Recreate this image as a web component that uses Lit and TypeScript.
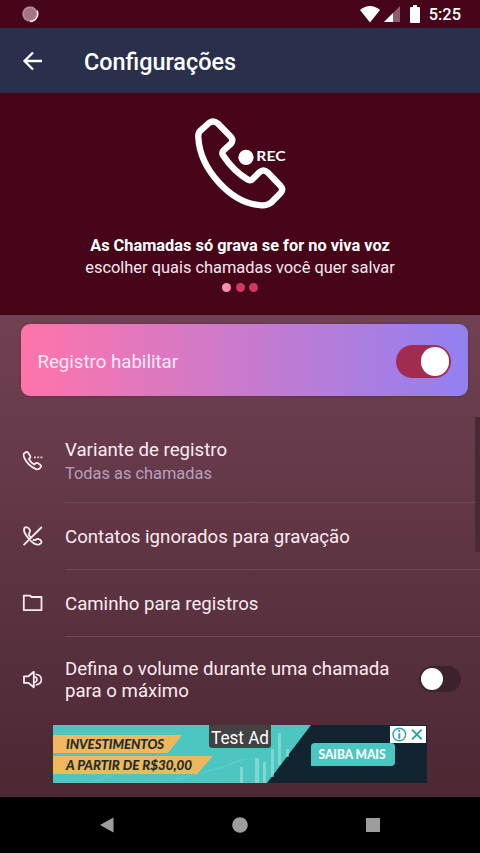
import { LitElement, html, css, svg } from "lit";
import { customElement } from "lit/decorators.js";

const callPath =
  "M59 94Q54 101 55 113C60 205 150 311 245 316Q262 317 273 308L302 279Q311 268 302 258L263 217Q250 206 238 217L218 237Q212 243 204 239C175 222 145 190 128 164Q125 158 130 152L153 131Q161 121 153 111L113 70Q100 59 87 69Z";

@customElement("toggle-switch")
class ToggleSwitch extends LitElement {
  static properties = { on: { type: Boolean, reflect: true } };
  static styles = css`
    :host { display: flex; align-items: center; box-sizing: border-box; width: 42px; height: 26px; border-radius: 13px; padding: 2px; background: #3c222c; }
    :host([on]) { width: 55px; height: 33px; border-radius: 17px; background: #a12c50; justify-content: flex-end; }
    .knob { width: 22px; height: 22px; border-radius: 50%; background: #fff; }
    :host([on]) .knob { width: 28.5px; height: 28.5px; }
  `;
  render() { return html`<div class="knob"></div>`; }
}

@customElement("app-root")
class AppRoot extends LitElement {
  static styles = css`
    :host { display: flex; flex-direction: column; width: 480px; height: 853px; overflow: hidden; background: #000; color: #fff; font-family: Roboto, "Noto Sans", sans-serif; }
    svg { display: block; flex: none; }
    .status { height: 28px; flex: none; background: #47051a; display: flex; align-items: center; box-sizing: border-box; padding: 0 19px 0 21px; }
    .status .time { font-size: 16.4px; font-weight: 500; line-height: 28px; margin-left: 9px; padding-top: 1px; }
    .spacer { flex: 1; }
    .wifi { margin-right: 4px; }
    .signal { margin-right: 10px; }
    .bar { height: 65px; flex: none; background: #2a304b; display: flex; align-items: center; padding-left: 22px; }
    .bar h1 { margin: 2px 0 0 41px; font-size: 23.4px; font-weight: 500; line-height: 30px; }
    .hero { height: 222px; flex: none; background: #47051a; display: flex; flex-direction: column; align-items: center; box-sizing: border-box; padding-top: 7px; font-size: 16.4px; line-height: 22px; }
    .hero .lead { font-weight: 700; font-size: 16.35px; margin-top: 15px; }
    .hero .sub { color: #f8e8ef; }
    .dots { display: flex; gap: 4.5px; margin-top: 3.5px; }
    .dot { width: 9px; height: 9px; border-radius: 50%; background: #cf3961; }
    .dot.active { background: #fc90ab; }
    .content { position: relative; height: 482px; flex: none; background: linear-gradient(#704153, #4c2833); display: flex; flex-direction: column; }
    .card { margin: 9px 12px 0 21px; height: 72px; flex: none; border-radius: 9px; background: linear-gradient(90deg, #ff74aa, #9280f1); box-shadow: 0 0 2px rgba(50, 20, 40, 0.45); display: flex; align-items: center; justify-content: space-between; box-sizing: border-box; padding: 3px 17px 0 16.5px; font-size: 18.65px; color: #ffeaf6; }
    .card span { padding-top: 1px; }
    .list { margin-top: 24px; }
    .row { display: flex; align-items: center; box-sizing: border-box; height: 66.8px; padding-left: 21px; }
    .row.tall { height: 83px; }
    .row.last { height: 86px; }
    .body { margin-left: 20px; flex: 1; align-self: stretch; display: flex; align-items: center; border-bottom: 1px solid #70485a; padding-top: 2px; }
    .row.tall .body { padding-top: 0; }
    .row.last .body { border: 0; padding-top: 0; }
    .label { font-size: 18.65px; line-height: 22px; color: #fcebf1; }
    .hint { font-size: 16.4px; line-height: 20px; margin-top: 3px; color: #b4a1bd; }
    .body toggle-switch { margin: 0 19px 0 auto; }
    .last toggle-switch { margin-top: -2px; }
    .scroll { position: absolute; right: 0; top: 102px; width: 5px; height: 135px; background: #4b2834; }
    .ad { position: absolute; left: 53px; top: 410px; }
    .nav { flex: 1; display: flex; align-items: center; justify-content: center; gap: 117px; padding-bottom: 1px; box-sizing: border-box; }
  `;

  private icon(name: string) {
    const paths: Record<string, unknown> = {
      call: svg`<path d="M3 3.4Q2 5 3.2 7.6C5.5 12.5 9.5 16.6 14.5 18.9Q17 20 18.6 18.4L19.8 17Q20.6 16 19.5 15L16.6 13.1Q15.3 12.4 14.3 13.5L13.3 14.5C11 13.3 9 11.2 7.8 9L8.9 8Q9.9 7 9.1 5.8L7 2.7Q6.2 1.6 5 2.1Z"/><path stroke="#eebdca" stroke-dasharray="2 1.2" d="M13 7.3H21.4"/>`,
      ignored: svg`<path d="M8 15C5 11.5 2.8 8 3 5.5Q3.3 3.2 5.3 3.2Q7.5 3.3 8.9 6Q9.5 7.5 8.3 9Q7.4 10.2 8.2 11.5L9.6 13.4M9.2 16.3C12.5 19.5 16 21 18.2 20.4Q20.6 19.3 20.6 17.8Q20 15.6 17 14.9Q15.6 14.8 14.8 15.8Q13.8 16.6 11.8 15.4M2.6 21.2L20.8 3"/>`,
      folder: svg`<path d="M2.8 4.6H9.1L10.5 6H20.5V19.2H2.8Z"/>`,
      volume: svg`<path d="M3 8.3H7.4L12.8 3.8V19.3L7.4 14.9H3Z"/><path stroke-width="1.6" d="M13 8.7Q16 9 16 11.6Q16 14.2 13 14.5M14.6 6.2Q20.4 7 20.4 11.6Q20.4 16.2 14.6 17"/>`,
    };
    return html`<svg width="24" height="24" viewBox="0 0 24 24" fill="none" stroke="#fcebf1" stroke-width="1.8" stroke-linejoin="round" stroke-linecap="butt">${paths[name]}</svg>`;
  }

  private row(icon: string, label: unknown, kind = "", extra: unknown = "", end: unknown = "") {
    return html`<div class="row ${kind}">${this.icon(icon)}<div class="body"><div><div class="label">${label}</div>${extra}</div>${end}</div></div>`;
  }

  render() {
    return html`
      <div class="status">
        <svg width="18" height="18" viewBox="0 0 18 18"><circle cx="9" cy="9" r="7.8" fill="#a57484"/><circle cx="9" cy="9" r="6.5" fill="none" stroke="#c5a2ad" stroke-width="1.2" stroke-dasharray="1 1"/><path d="M16 5.5A7.7 7.7 0 0 1 9 16.5" fill="none" stroke="#fbeaf0" stroke-width="1.5"/></svg>
        <div class="spacer"></div>
        <svg class="wifi" width="20" height="17" viewBox="0 0 20 17"><path fill="#fff" d="M0 4Q10-4 20 4L10 16.5Z"/></svg>
        <svg class="signal" width="16" height="16" viewBox="0 0 16 16"><path fill="#8d5c6d" d="M16 0V16H0Z"/><path fill="#fff" d="M9 7V16H0Z"/></svg>
        <svg width="10" height="18" viewBox="0 0 10 18"><path fill="#fff" d="M3 0H7V2H9Q10 2 10 3V17Q10 18 9 18H1Q0 18 0 17V3Q0 2 1 2H3Z"/></svg>
        <div class="time">5:25</div>
      </div>
      <div class="bar">
        <svg width="21" height="20" viewBox="0 0 21 20"><path d="M20 10H3M11 1.5L2.5 10L11 18.5" fill="none" stroke="#fff" stroke-width="2.3"/></svg>
        <h1>Configurações</h1>
      </div>
      <div class="hero">
        <svg width="120" height="120" viewBox="0 0 360 360">
          <path d=${callPath} fill="none" stroke="#fff" stroke-width="19" stroke-linejoin="round"/>
          <circle cx="198" cy="172" r="23" fill="#fff"/>
          <text x="229" y="183" fill="#fff" font-family="Lato, sans-serif" font-weight="700" font-size="41" textLength="88" lengthAdjust="spacingAndGlyphs">REC</text>
        </svg>
        <div class="lead">As Chamadas só grava se for no viva voz</div>
        <div class="sub">escolher quais chamadas você quer salvar</div>
        <div class="dots"><div class="dot active"></div><div class="dot"></div><div class="dot"></div></div>
      </div>
      <div class="content">
        <div class="card"><span>Registro habilitar</span><toggle-switch on></toggle-switch></div>
        <div class="list">
          ${this.row("call", "Variante de registro", "tall", html`<div class="hint">Todas as chamadas</div>`)}
          ${this.row("ignored", "Contatos ignorados para gravação")}
          ${this.row("folder", "Caminho para registros")}
          ${this.row("volume", html`Defina o volume durante uma chamada<br>para o máximo`, "last", "", html`<toggle-switch></toggle-switch>`)}
        </div>
        <div class="scroll"></div>
        <svg class="ad" width="374" height="58" viewBox="0 0 374 58">
          <path fill="#132431" d="M0 0H374V58H0Z"/>
          <path fill="#4cc6c0" d="M0 0H258L214 58H0Z"/>
          <path fill="#efb85f" d="M0 10H129L115 28H0ZM0 31H160L144 49H0Z"/>
          <g fill="#a4e2dd" opacity=".6"><path d="M187 42h3v16h-3zM202 33h4v25h-4zM210 37h3v21h-3zM218 24h3v28h-3zM225 8h3v32h-3zM233 24h3v8h-3z"/><path fill="none" stroke="#a4e2dd" stroke-width=".7" opacity=".6" d="M36 58L58 51M121 55L145 49L170 42L190 34M175 40L195 34"/></g>
          <g fill="#202d2b" stroke="#202d2b" stroke-width=".2" font-family="Lato, sans-serif" font-weight="700" font-style="italic" font-size="13"><text x="13" y="24" textLength="98" lengthAdjust="spacingAndGlyphs">INVESTIMENTOS</text><text x="13" y="44.7" textLength="126" lengthAdjust="spacingAndGlyphs">A PARTIR DE R$30,00</text></g>
          <path fill="#4cc6c0" d="M262 18H338Q342 18 342 22V37Q342 41 338 41H258V22Q258 18 262 18Z"/>
          <text x="265.5" y="34" fill="#fff" font-family="Lato, sans-serif" font-weight="900" font-size="12.5" textLength="67" lengthAdjust="spacingAndGlyphs">SAIBA MAIS</text>
          <path fill="#424242" d="M156 0H218V20Q218 23 215 23H159Q156 23 156 20Z"/>
          <text x="158" y="18.5" fill="#fff" font-family="Roboto, sans-serif" font-size="18.5" textLength="58" lengthAdjust="spacingAndGlyphs">Test Ad</text>
          <path fill="#fff" d="M337 1H373V18H337Z"/>
          <g fill="none" stroke="#329fad" stroke-width="1.4"><circle cx="346.3" cy="9.5" r="6.3"/><path stroke-width="2" d="M346.3 8.2V13.8M346.3 5V7M359 4.6L368.7 14.4M368.7 4.6L359 14.4"/></g>
        </svg>
      </div>
      <div class="nav">
        <svg width="16" height="16" viewBox="0 0 16 16"><path fill="#9d9d9d" d="M1 8L14.5 .5V15.5Z"/></svg>
        <svg width="16" height="16" viewBox="0 0 16 16"><circle cx="8" cy="8" r="7.8" fill="#9d9d9d"/></svg>
        <svg width="16" height="16" viewBox="0 0 16 16"><path fill="#9d9d9d" d="M1 1H15V15H1Z"/></svg>
      </div>`;
  }
}
